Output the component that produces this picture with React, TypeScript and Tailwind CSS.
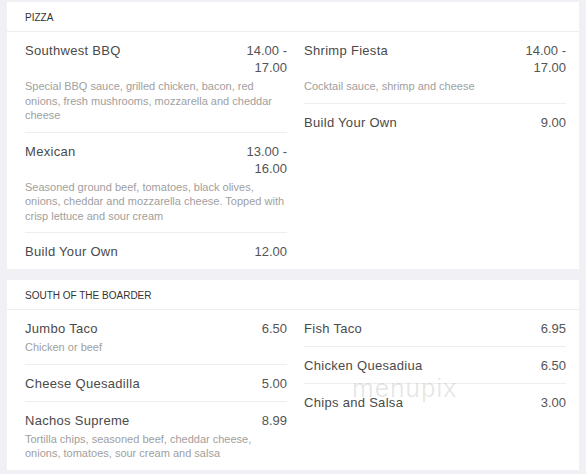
import React from "react";

type Item = { name: string; price: string[]; desc?: string };

const pizzaLeft: Item[] = [
  {
    name: "Southwest BBQ",
    price: ["14.00 -", "17.00"],
    desc: "Special BBQ sauce, grilled chicken, bacon, red onions, fresh mushrooms, mozzarella and cheddar cheese",
  },
  {
    name: "Mexican",
    price: ["13.00 -", "16.00"],
    desc: "Seasoned ground beef, tomatoes, black olives, onions, cheddar and mozzarella cheese. Topped with crisp lettuce and sour cream",
  },
  { name: "Build Your Own", price: ["12.00"] },
];

const pizzaRight: Item[] = [
  { name: "Shrimp Fiesta", price: ["14.00 -", "17.00"], desc: "Cocktail sauce, shrimp and cheese" },
  { name: "Build Your Own", price: ["9.00"] },
];

const southLeft: Item[] = [
  { name: "Jumbo Taco", price: ["6.50"], desc: "Chicken or beef" },
  { name: "Cheese Quesadilla", price: ["5.00"] },
  {
    name: "Nachos Supreme",
    price: ["8.99"],
    desc: "Tortilla chips, seasoned beef, cheddar cheese, onions, tomatoes, sour cream and salsa",
  },
];

const southRight: Item[] = [
  { name: "Fish Taco", price: ["6.95"] },
  { name: "Chicken Quesadiua", price: ["6.50"] },
  { name: "Chips and Salsa", price: ["3.00"] },
];

function MenuItem({ item }: { item: Item }) {
  return (
    <div className="pt-[10px] pb-[9px]">
      <div className="flex justify-between items-start text-[13px] leading-[17px]">
        <div className="text-[#4a4a4a] tracking-[0.3px]">{item.name}</div>
        <div className="text-[#555] text-right w-[50px] shrink-0">
          {item.price.map((p, i) => (
            <div key={i}>{p}</div>
          ))}
        </div>
      </div>
      {item.desc && (
        <div className="mt-[3px] text-[11px] leading-[14.5px] text-[#a0a0a0]">{item.desc}</div>
      )}
    </div>
  );
}

function Column({ items }: { items: Item[] }) {
  return (
    <div className="flex flex-col divide-y divide-[#eeeeee]">
      {items.map((it, i) => (
        <MenuItem key={i} item={it} />
      ))}
    </div>
  );
}

function Card({ title, left, right }: { title: string; left: Item[]; right: Item[] }) {
  return (
    <div className="bg-white">
      <div className="h-[30px] flex items-center pt-[1px] pl-[18px] text-[10px] text-[#333] border-b border-[#eeeeee] uppercase">
        {title}
      </div>
      <div className="grid grid-cols-[262px_262px] gap-x-[17px] pl-[18px]">
        <Column items={left} />
        <Column items={right} />
      </div>
    </div>
  );
}

export default function App() {
  return (
    <div
      className="relative w-[586px] h-[474px] bg-[#f1f1f5] px-[7px] pt-[2px] overflow-hidden"
      style={{ fontFamily: '"Liberation Sans", Arial, sans-serif' }}
    >
      <Card title="Pizza" left={pizzaLeft} right={pizzaRight} />
      <div className="mt-[11px]">
        <Card title="South of the Boarder" left={southLeft} right={southRight} />
      </div>
      <div className="pointer-events-none absolute left-[352px] top-[375px] text-[26px] leading-[26px] text-[#000]/10 tracking-[1px]">
        menupix
      </div>
    </div>
  );
}
